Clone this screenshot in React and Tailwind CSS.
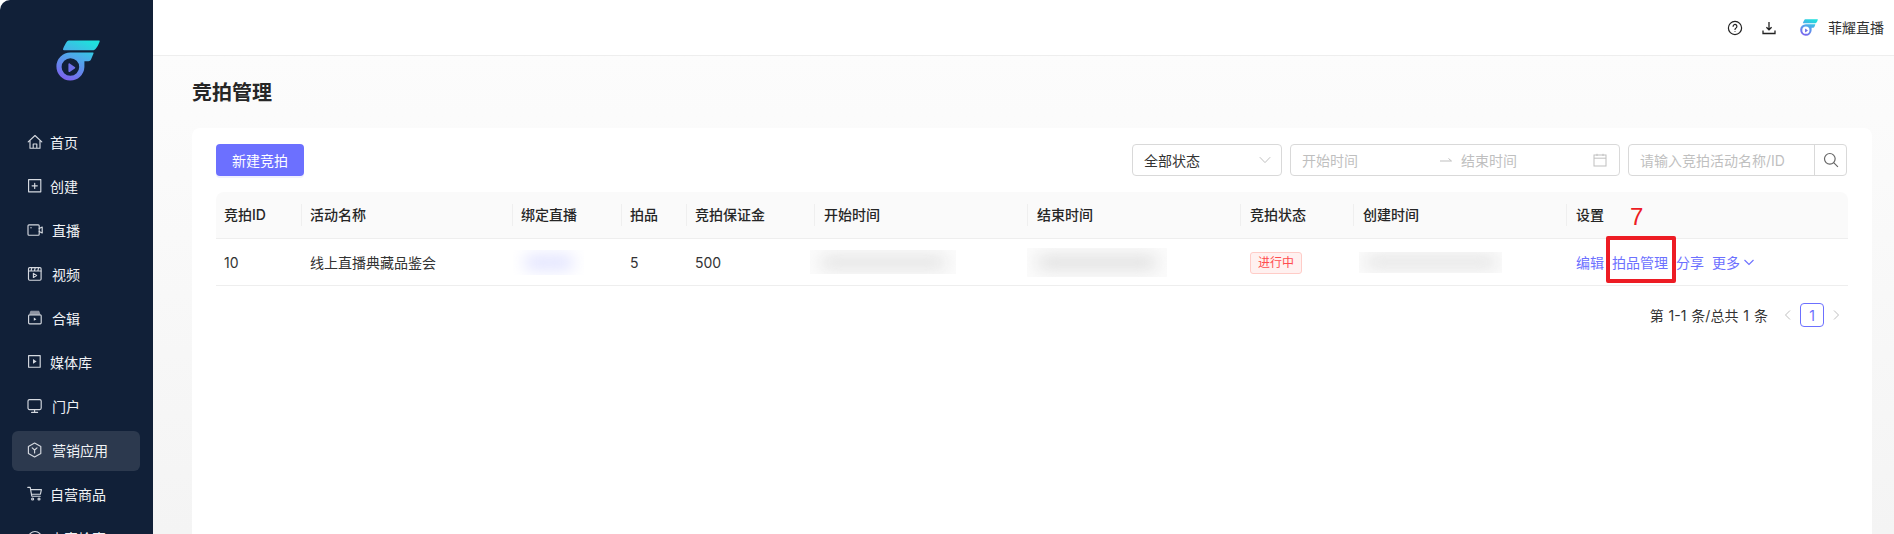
import React from "react";

const FONT = '"Inter","Noto Sans CJK SC",sans-serif';

function Logo({ className, id }) {
  return (
    <svg className={className} viewBox="0 0 44 41" fill="none">
      <defs>
        <linearGradient id={id} x1="30" y1="0" x2="12" y2="41" gradientUnits="userSpaceOnUse">
          <stop offset="0" stopColor="#1fe0dc" />
          <stop offset="0.45" stopColor="#4fa8ea" />
          <stop offset="1" stopColor="#7c62ee" />
        </linearGradient>
      </defs>
      <path d="M11 1.5C11.6 .7 12.4 .5 13.4 .5H42.6C43.6 .5 44 1 43.5 1.9C42.7 3.5 41.5 7 39.5 9C38.7 9.8 37.8 10.3 36.6 10.3H8C7 10.3 6.8 9.6 7.2 8.6C8 6.5 9.6 3.4 11 1.5Z" fill={`url(#${id})`} />
      <path d="M14.5 12.5H36.6C37.5 12.5 37.8 13 37.4 13.8L35 19.5C34.5 20.6 33.6 21.2 32.4 21.2H28.4V27A14 14 0 1 1 14.5 12.5ZM14.5 18.2A8.8 8.8 0 1 0 23.2 27A8.8 8.8 0 0 0 14.5 18.2Z" fill={`url(#${id})`} fillRule="evenodd" />
      <path d="M12.4 24.2C12.4 23.5 13 23.1 13.7 23.5L18.8 27C19.4 27.4 19.4 28 18.8 28.4L13.7 31.9C13 32.3 12.4 31.9 12.4 31.2Z" fill="#6f6ee8" />
    </svg>
  );
}

function Ico({ children, w = 16, h = 16, vb = "0 0 16 16", cls = "" }) {
  return (
    <svg width={w} height={h} viewBox={vb} fill="none" stroke="#d5d9e0" strokeWidth="1.15" strokeLinejoin="round" strokeLinecap="round" className={"shrink-0 " + cls}>
      {children}
    </svg>
  );
}

const HomeI = () => (
  <Ico>
    <path d="M1.2 7.8 8 1.5l6.8 6.3M3 6.5v7.7h10V6.5M6.2 14.2V10h3.6v4.2" />
  </Ico>
);
const PlusI = () => (
  <Ico>
    <rect x="1.6" y="1.6" width="12.2" height="12.2" />
    <path d="M7.7 5.2v5.2M5.1 7.8h5.2" />
  </Ico>
);
const LiveI = () => (
  <Ico w={16}>
    <rect x="1" y="2.8" width="11.2" height="10.4" rx="1" />
    <path d="M12.2 6.4l3-1.4v6l-3-1.4" />
    <circle cx="4" cy="5.8" r=".7" fill="#d5d9e0" stroke="none" />
  </Ico>
);
const VideoI = () => (
  <Ico>
    <rect x="1.5" y="1.6" width="12.6" height="12.6" rx="1.2" />
    <path d="M1.8 5h12.2M4.8 1.8 4 5M8.2 1.8 7.4 5M11.6 1.8 10.8 5" />
    <path d="M6.4 7.4v4l3.2-2z" />
  </Ico>
);
const AlbumI = () => (
  <Ico>
    <path d="M4 1.2h7.6l1 2.4H3z" fill="#8f95a3" stroke="#8f95a3" />
    <rect x="1.6" y="4.8" width="12.6" height="9" rx="1" />
    <path d="M6.8 7.6v3.2l2.6-1.6z" fill="#d5d9e0" stroke="none" />
  </Ico>
);
const MediaI = () => (
  <Ico>
    <rect x="1.6" y="1.6" width="11.6" height="11.6" />
    <path d="M6 5v4.8l3.6-2.4z" fill="#d5d9e0" stroke="none" />
  </Ico>
);
const MonitorI = () => (
  <Ico>
    <rect x="1" y="1.6" width="13.2" height="10" rx="1.5" />
    <path d="M7.6 11.6v2.6M4.6 14.4h6" />
  </Ico>
);
const HexI = () => (
  <Ico>
    <path d="M7.6 1 13.8 4.4v7.2L7.6 15 1.4 11.6V4.4z" />
    <path d="M5.2 5.8 7.6 8l2.4-2.2M7.6 8v3" />
  </Ico>
);
const CartI = () => (
  <Ico>
    <path d="M.8 1.4h2.4l1.6 8.8h8.4M3.6 3.6h10.8l-1 4.6H4.4" />
    <circle cx="5.6" cy="13" r="1" />
    <circle cx="12" cy="13" r="1" />
  </Ico>
);
const GlobeI = () => (
  <Ico>
    <circle cx="8" cy="8" r="6.5" />
  </Ico>
);

const menu = [
  { label: "首页", I: HomeI, gap: "gap-[7px]" },
  { label: "创建", I: PlusI, gap: "gap-[7px]" },
  { label: "直播", I: LiveI, gap: "gap-[9px]" },
  { label: "视频", I: VideoI, gap: "gap-[9px]" },
  { label: "合辑", I: AlbumI, gap: "gap-[9px]" },
  { label: "媒体库", I: MediaI, gap: "gap-[7px]" },
  { label: "门户", I: MonitorI, gap: "gap-[9px]" },
  { label: "营销应用", I: HexI, gap: "gap-[9px]", active: true },
  { label: "自营商品", I: CartI, gap: "gap-[7px]" },
  { label: "内容检索", I: GlobeI, gap: "gap-[7px]" },
];

function Sidebar() {
  return (
    <aside className="w-[153px] shrink-0 h-full bg-[#112038] rounded-tl-[10px] overflow-hidden">
      <div className="h-[123px] pl-[56px] pt-[40px]">
        <Logo id="lg1" className="w-[44px] h-[41px]" />
      </div>
      <nav className="flex flex-col gap-[4px] pl-[12px] pr-[13px]">
        {menu.map((m) => (
          <div
            key={m.label}
            className={
              "h-[40px] shrink-0 flex items-center pl-[15px] pb-[2px] rounded-[6px] text-[14px] text-[#f0f2f5] " +
              m.gap +
              (m.active ? " bg-[#2c394e]" : "")
            }
          >
            <m.I />
            <span>{m.label}</span>
          </div>
        ))}
      </nav>
    </aside>
  );
}

function Header() {
  return (
    <header className="h-[56px] shrink-0 bg-white border-b border-[#eeeeee] flex items-center justify-end pr-[10px]">
      <svg width="16" height="16" viewBox="0 0 16 16" fill="none" stroke="#222" strokeWidth="1.2" strokeLinecap="round" className="mr-[19px]">
        <circle cx="8" cy="8" r="6.6" />
        <path d="M6.1 6.3a1.9 1.9 0 1 1 2.9 1.6c-.7.4-1 .8-1 1.5" />
        <circle cx="8" cy="11.4" r=".5" fill="#222" stroke="none" />
      </svg>
      <svg width="14" height="14" viewBox="0 0 14 14" fill="none" stroke="#222" strokeWidth="1.3" className="mr-[24px]">
        <path d="M7 1v7.6M4.4 6.2 7 8.8l2.6-2.6M1 9.5v3h12v-3" />
      </svg>
      <Logo id="lg2" className="w-[18px] h-[17px] mr-[10px]" />
      <span className="text-[14px] text-[#333]">菲耀直播</span>
    </header>
  );
}

function Blur({ w, h, ml, color = "bg-[#dedede]", box = "bg-[#fbfbfb]", inner }) {
  return (
    <div style={{ width: w, height: h, marginLeft: ml }} className={"relative overflow-hidden flex items-center justify-center " + box}>
      <div className={"rounded-full blur-[8px] " + color + " " + inner} />
    </div>
  );
}

const cols = "grid grid-cols-[86px_211px_109px_65px_128px_213px_213px_113px_213px_281px]";

const heads = ["竞拍ID", "活动名称", "绑定直播", "拍品", "竞拍保证金", "开始时间", "结束时间", "竞拍状态", "创建时间", "设置"];

function Table() {
  return (
    <div>
      <div className={cols + " h-[47px] bg-[#fafafa] rounded-t-[8px] border-b border-[#eeeeee] items-center text-[14px] font-medium text-[#262626]"}>
        {heads.map((h, i) => (
          <div key={h} className={"h-[22px] leading-[22px] " + (i >= 5 ? "pl-[9px] " : "pl-[8px] ") + (i < 9 ? "border-r border-[#efefef]" : "")}>
            {h}
          </div>
        ))}
      </div>
      <div className={cols + " h-[47px] border-b border-[#eeeeee] items-center text-[14px] text-[#333]"}>
        <div className="pl-[8px]">10</div>
        <div className="pl-[8px]">线上直播典藏品鉴会</div>
        <Blur w="71px" h="25px" ml="0px" color="bg-[#dcdeff]" box="bg-white" inner="w-[50px] h-[13px]" />
        <div className="pl-[8px]">5</div>
        <div className="pl-[8px]">500</div>
        <Blur w="146px" h="24px" ml="-5px" inner="w-[125px] h-[11px]" />
        <Blur w="140px" h="29px" ml="-1px" inner="w-[120px] h-[13px]" />
        <div className="pl-[9px]">
          <span className="inline-flex items-center justify-center w-[52px] h-[22px] rounded-[3px] border border-[#ffccc7] bg-[#fff1f0] text-[12px] text-[#ff4d4f]">
            进行中
          </span>
        </div>
        <Blur w="143px" h="21px" ml="5px" inner="w-[130px] h-[10px]" />
        <div className="pl-[9px] flex items-center gap-[8px] text-[#6c70ff]">
          <span>编辑</span>
          <span>拍品管理</span>
          <span>分享</span>
          <span className="flex items-center gap-[3px]">
            更多
            <svg width="12" height="12" viewBox="0 0 12 12" fill="none" stroke="#6c70ff" strokeWidth="1.1">
              <path d="M1.5 4 6 8.5 10.5 4" />
            </svg>
          </span>
        </div>
      </div>
    </div>
  );
}

function Toolbar() {
  return (
    <div className="flex items-center h-[32px] mb-[16px]">
      <button className="w-[88px] h-[32px] rounded-[4px] bg-[#6c70ff] text-white text-[14px] shadow-[0_2px_0_rgba(108,112,255,0.1)]">
        新建竞拍
      </button>
      <div className="ml-auto flex items-center gap-[8px] pr-[1px] text-[14px]">
        <div className="w-[150px] h-[32px] rounded-[4px] border border-[#d9d9d9] bg-white flex items-center pl-[11px] pr-[10px] justify-between text-[#333]">
          <span>全部状态</span>
          <svg width="12" height="12" viewBox="0 0 12 12" fill="none" stroke="#bfbfbf" strokeWidth="1">
            <path d="M.8 3.2 6 8.6l5.2-5.4" />
          </svg>
        </div>
        <div className="w-[330px] h-[32px] rounded-[4px] border border-[#d9d9d9] bg-white flex items-center pl-[11px] pr-[12px] text-[#bfbfbf]">
          <span className="w-[138px]">开始时间</span>
          <svg width="14" height="10" viewBox="0 0 14 10" fill="none" stroke="#bfbfbf" strokeWidth="1" className="mr-[8px] -ml-[1px]">
            <path d="M1 6h11.5L9.5 3.5" />
          </svg>
          <span>结束时间</span>
          <svg width="14" height="14" viewBox="0 0 14 14" fill="none" stroke="#bfbfbf" strokeWidth="1" className="ml-auto">
            <rect x="1" y="2" width="12" height="11" />
            <path d="M1 5.2h12M4 .8V3M10 .8V3" />
          </svg>
        </div>
        <div className="w-[219px] h-[32px] rounded-[4px] border border-[#d9d9d9] bg-white flex items-center text-[#bfbfbf]">
          <span className="flex-1 pl-[11px] whitespace-nowrap">请输入竞拍活动名称/ID</span>
          <span className="w-[32px] h-full border-l border-[#d9d9d9] flex items-center justify-center">
            <svg width="16" height="16" viewBox="0 0 15 15" fill="none" stroke="#666" strokeWidth="1.1">
              <circle cx="6.4" cy="6.4" r="5" />
              <path d="M10 10l4 4" />
            </svg>
          </span>
        </div>
      </div>
    </div>
  );
}

function Pagination() {
  return (
    <div className="flex items-center justify-end mt-[17px] h-[24px] text-[14px] text-[#333] pr-[6px]">
      <span className="mr-[14px] [word-spacing:1px]">第 1-1 条/总共 1 条</span>
      <svg width="12" height="12" viewBox="0 0 12 12" fill="none" stroke="#bfbfbf" strokeWidth="1" className="mr-[6px]">
        <path d="M8 1.5 3.5 6 8 10.5" />
      </svg>
      <span className="w-[24px] h-[24px] rounded-[4px] border border-[#6c70ff] text-[#6c70ff] flex items-center justify-center mr-[6px]">1</span>
      <svg width="12" height="12" viewBox="0 0 12 12" fill="none" stroke="#bfbfbf" strokeWidth="1">
        <path d="M4 1.5 8.5 6 4 10.5" />
      </svg>
    </div>
  );
}

export default function App() {
  return (
    <div className="relative w-[1894px] h-[534px] overflow-hidden flex bg-white" style={{ fontFamily: FONT }}>
      <Sidebar />
      <main className="flex-1 min-w-0 h-full flex flex-col">
        <Header />
        <div className="flex-1 min-h-0 bg-gradient-to-b from-[#fcfcfc] to-[#f4f4f4] px-[22px] overflow-hidden">
          <h1 className="h-[72px] flex items-center pl-[17px] pt-[2px] text-[20px] font-semibold text-[#262626] m-0 leading-none">
            竞拍管理
          </h1>
          <section className="ml-[17px] w-[1680px] h-[420px] bg-white rounded-t-[8px] pt-[16px] px-[24px]">
            <Toolbar />
            <Table />
            <Pagination />
          </section>
        </div>
      </main>
      <div className="absolute left-[1606px] top-[236px] w-[70px] h-[47px] border-[4px] border-[#ed1c24] rounded-[2px]" />
      <div className="absolute left-[1630px] top-[202px] text-[24px] leading-[30px] text-[#ed1c24]" style={{ fontFamily: '"Liberation Sans",sans-serif' }}>
        7
      </div>
    </div>
  );
}
